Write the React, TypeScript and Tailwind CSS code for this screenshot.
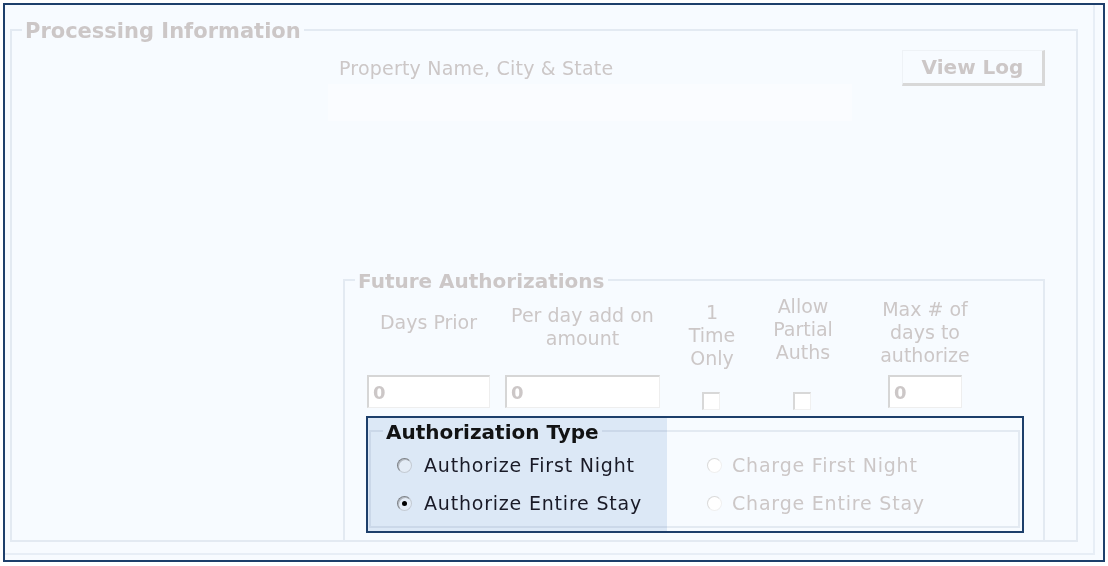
import type { JSX } from "react";

const Radio = ({ checked = false, faded = false }: { checked?: boolean; faded?: boolean }): JSX.Element => (
  <span
    className={
      faded
        ? "relative block w-[15px] h-[15px] shrink-0 rounded-full bg-white border border-[#dadada] border-r-[#f0f0f0] border-b-[#f0f0f0]"
        : "relative block w-[15px] h-[15px] shrink-0 rounded-full bg-white border border-[#8c8c8c] border-r-[#dcdcdc] border-b-[#dcdcdc] shadow-[inset_1px_1px_0_#c8c8c8]"
    }
  >
    {checked && (
      <span className="absolute left-[4px] top-[4px] w-[5px] h-[5px] rounded-full bg-black" />
    )}
  </span>
);

const Field = ({ w }: { w: string }): JSX.Element => (
  <div
    className={`${w} h-[33px] bg-white border-t-2 border-l-2 border-[#d6d6d6] border-r border-b border-r-[#eeeeee] border-b-[#eeeeee] pl-[4px] text-left text-[18px] font-bold leading-[31px] text-[#ccc7c7]`}
  >
    0
  </div>
);

const Check = (): JSX.Element => (
  <span className="block w-[18px] h-[18px] -mb-[2px] mr-[2px] bg-white border-t-2 border-l-2 border-[#d8d8d8] border-r border-b border-r-[#f0f0f0] border-b-[#f0f0f0]" />
);

export default function App(): JSX.Element {
  return (
    <div className="w-[1108px] h-[566px] bg-white pt-[3px] pl-[3px] font-['DejaVu_Sans',Verdana,sans-serif]">
      <div className="w-[1102px] h-[559px] border-2 border-[#1d3f6b] bg-[#f7fbff]">
        <div className="w-[1090px] h-[550px] border-r-2 border-b-2 border-[#e7eef6] pt-[12px] pl-[5px]">
          {/* Processing Information */}
          <fieldset className="w-[1068px] h-[525px] border-2 border-[#e3eaf2] flex">
            <legend className="ml-[10px] px-[3px] pt-[2px] text-[21px] leading-[24px] font-bold text-[#ccc7c7]">
              Processing Information
            </legend>
            <div className="w-[316px] shrink-0" />
            <div className="flex-1 flex flex-col">
              <div className="flex items-start mt-[7px]">
                <div className="w-[524px]">
                  <div className="pt-[6px] pl-[11px] text-[19px] leading-[24px] tracking-[0.2px] text-[#ccc7c7]">
                    Property Name, City &amp; State
                  </div>
                  <div className="mt-[4px] h-[37px] bg-[#fafcff]" />
                </div>
                <button className="ml-[50px] w-[143px] h-[36px] border-t border-l border-[#eef2f6] border-r-[3px] border-b-[3px] border-r-[#d8d8d8] border-b-[#d8d8d8] text-[20px] font-bold leading-[30px] text-[#ccc7c7]">
                  View Log
                </button>
              </div>

              {/* Future Authorizations */}
              <fieldset className="mt-[146px] ml-[15px] w-[702px] h-[273px] border-2 border-b-0 border-[#e3eaf2]">
                <legend className="ml-[10px] px-[3px] pt-[2px] text-[20px] leading-[24px] font-bold text-[#ccc7c7]">
                  Future Authorizations
                </legend>
                <div className="flex pl-[22px] h-[115px] text-[19px] leading-[23px] text-[#ccc7c7] text-center">
                  <div className="w-[123px] flex flex-col justify-between">
                    <div className="pt-[18px]">Days Prior</div>
                    <Field w="w-[123px]" />
                  </div>
                  <div className="ml-[15px] w-[155px] flex flex-col justify-between">
                    <div className="pt-[11px]">
                      Per day add on
                      <br />
                      amount
                    </div>
                    <Field w="w-[155px]" />
                  </div>
                  <div className="ml-[2px] w-[100px] flex flex-col items-center justify-between">
                    <div className="pt-[8px]">
                      1
                      <br />
                      Time
                      <br />
                      Only
                    </div>
                    <Check />
                  </div>
                  <div className="w-[82px] flex flex-col items-center justify-between">
                    <div className="pt-[2px]">
                      Allow
                      <br />
                      Partial
                      <br />
                      Auths
                    </div>
                    <Check />
                  </div>
                  <div className="w-[162px] flex flex-col items-center justify-between">
                    <div className="pt-[5px]">
                      Max # of
                      <br />
                      days to
                      <br />
                      authorize
                    </div>
                    <Field w="w-[74px]" />
                  </div>
                </div>

                {/* Authorization Type */}
                <div className="relative mt-[8px] ml-[21px] w-[658px] h-[117px] border-2 border-[#1d3f6b]">
                  <fieldset className="ml-[1px] w-[651px] h-[110px] border-2 border-[#e3eaf2] flex flex-col">
                    <legend className="ml-[12px] px-[3px] pt-[2px] text-[20px] leading-[24px] font-bold text-[#141414]">
                      Authorization Type
                    </legend>
                    <div className="flex pt-[9px] text-[19px] leading-[24px] tracking-[0.8px]">
                      <div className="w-[298px] pl-[26px] flex flex-col gap-[14px] text-[#1c1c28]">
                        <div className="flex items-center gap-[12px]">
                          <Radio />
                          <span>Authorize First Night</span>
                        </div>
                        <div className="flex items-center gap-[12px]">
                          <Radio checked />
                          <span>Authorize Entire Stay</span>
                        </div>
                      </div>
                      <div className="pl-[38px] flex flex-col gap-[14px] text-[#ccc7c7]">
                        <div className="flex items-center gap-[10px]">
                          <Radio faded />
                          <span>Charge First Night</span>
                        </div>
                        <div className="flex items-center gap-[10px]">
                          <Radio faded />
                          <span>Charge Entire Stay</span>
                        </div>
                      </div>
                    </div>
                  </fieldset>
                  <div className="absolute left-0 top-0 bottom-0 w-[299px] bg-[#e4ecf6] mix-blend-multiply pointer-events-none" />
                </div>
              </fieldset>
            </div>
          </fieldset>
        </div>
      </div>
    </div>
  );
}
